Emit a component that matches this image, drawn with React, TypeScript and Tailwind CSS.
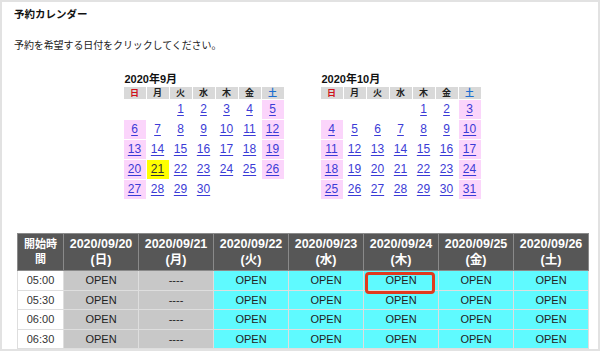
import React from "react";

const WEEK = ["日", "月", "火", "水", "木", "金", "土"];

type Month = { title: string; start: number; days: number };

const MONTHS: Month[] = [
  { title: "2020年9月", start: 2, days: 30 },
  { title: "2020年10月", start: 4, days: 31 },
];

const MiniCalendar = ({ month }: { month: Month }) => {
  const cells: (number | null)[] = [];
  for (let i = 0; i < month.start; i++) cells.push(null);
  for (let d = 1; d <= month.days; d++) cells.push(d);
  while (cells.length % 7 !== 0) cells.push(null);
  const rows: (number | null)[][] = [];
  for (let i = 0; i < cells.length; i += 7) rows.push(cells.slice(i, i + 7));

  return (
    <div className="w-[161px]">
      <div className="text-[11px] font-bold leading-[14px] text-[#111] pl-[1px]">{month.title}</div>
      <table className="border-separate border-spacing-[1px] w-[162px] -ml-[1px]">
        <thead>
          <tr>
            {WEEK.map((w, i) => (
              <th
                key={w}
                className={`h-[12px] p-0 bg-[#d9d9d9] text-[9px] leading-[12px] font-bold ${
                  i === 0 ? "text-[#d0121b]" : i === 6 ? "text-[#1d6fd0]" : "text-[#222]"
                }`}
              >
                {w}
              </th>
            ))}
          </tr>
        </thead>
        <tbody>
          {rows.map((r, ri) => (
            <tr key={ri}>
              {r.map((d, ci) => {
                const weekend = d !== null && (ci === 0 || ci === 6);
                const today = month.title === "2020年9月" && d === 21;
                const bg = today ? "bg-[#ffff00]" : weekend ? "bg-[#fbd5fb]" : "";
                return (
                  <td
                    key={ci}
                    className={`h-[19px] w-[22px] p-0 text-center text-[12px] leading-[19px] ${bg}`}
                  >
                    {d !== null && (
                      <span
                        className={`underline underline-offset-2 ${
                          today ? "text-[#333]" : "text-[#3b3bd6]"
                        }`}
                      >
                        {d}
                      </span>
                    )}
                  </td>
                );
              })}
            </tr>
          ))}
        </tbody>
      </table>
    </div>
  );
};

const DAYS = [
  { date: "2020/09/20", w: "日", state: "past-open" },
  { date: "2020/09/21", w: "月", state: "past-none" },
  { date: "2020/09/22", w: "火", state: "open" },
  { date: "2020/09/23", w: "水", state: "open" },
  { date: "2020/09/24", w: "木", state: "open" },
  { date: "2020/09/25", w: "金", state: "open" },
  { date: "2020/09/26", w: "土", state: "open" },
];

const TIMES = ["05:00", "05:30", "06:00", "06:30"];

const App = () => {
  return (
    <div
      className="w-[600px] h-[351px] border-2 border-[#e2e2e2] bg-white overflow-hidden"
      style={{ fontFamily: '"Liberation Sans", "Noto Sans CJK JP", sans-serif' }}
    >
      <div className="pl-[12px] pt-[5px] text-[#111]">
        <h1 className="text-[10.5px] font-bold leading-[14px]">予約カレンダー</h1>
        <p className="mt-[18px] text-[10px] leading-[14px] tracking-[-0.1px] text-[#222]">
          予約を希望する日付をクリックしてください。
        </p>
      </div>

      <div className="flex justify-center gap-[36px] mt-[19px] ml-[5px]">
        {MONTHS.map((m) => (
          <MiniCalendar key={m.title} month={m} />
        ))}
      </div>

      <div className="mt-[33px] ml-[15px]">
        <table className="border-collapse table-fixed w-[571px]">
          <colgroup>
            <col className="w-[46px]" />
            {DAYS.map((d) => (
              <col key={d.date} className="w-[75px]" />
            ))}
          </colgroup>
          <thead>
            <tr className="bg-[#575757] text-white">
              <th className="h-[37px] border border-[#8a8a8a] px-[4px] text-[11px] leading-[15px] font-bold">
                開始時間
              </th>
              {DAYS.map((d) => (
                <th
                  key={d.date}
                  className="h-[37px] border border-[#8a8a8a] p-0 text-[12.5px] leading-[16px] font-bold"
                >
                  {d.date}
                  <br />({d.w})
                </th>
              ))}
            </tr>
          </thead>
          <tbody>
            {TIMES.map((t, ri) => (
              <tr key={t}>
                <td className="h-[19.5px] border border-[#dedede] bg-white text-center text-[11px] leading-[18px] text-[#333] p-0">
                  {t}
                </td>
                {DAYS.map((d, ci) => {
                  const bg = d.state === "open" ? "bg-[#5ffaff]" : "bg-[#c8c8c8]";
                  const label = d.state === "past-none" ? "----" : "OPEN";
                  const picked = ri === 0 && ci === 4;
                  return (
                    <td
                      key={d.date}
                      className={`relative h-[19.5px] border border-[#dedede] ${bg} text-center text-[11px] leading-[18px] text-[#222] p-0`}
                    >
                      {label}
                      {picked && (
                        <span className="absolute z-10 left-[1px] right-[3px] top-[1px] bottom-[-4px] border-[3px] border-[#e0391e] rounded-[4px]" />
                      )}
                    </td>
                  );
                })}
              </tr>
            ))}
          </tbody>
        </table>
      </div>
    </div>
  );
};

export default App;
